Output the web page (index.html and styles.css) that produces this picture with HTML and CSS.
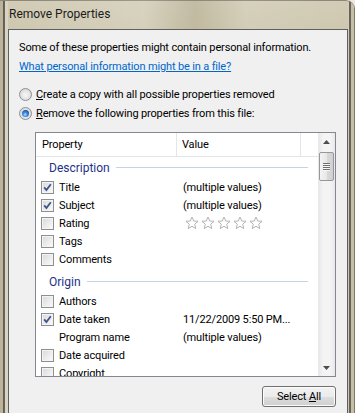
FILE: index.html
```html
<!DOCTYPE html>
<html>
<head>
<meta charset="utf-8">
<link rel="stylesheet" href="styles.css">
</head>
<body>
<div class="window">
  <div class="titlebar"><span class="title">Remove Properties</span></div>
  <div class="client">
    <p class="intro">Some of these properties might contain personal information.</p>
    <p class="intro"><a class="link" href="#">What personal information might be in a file?</a></p>
    <div class="radios">
      <div class="radio"><span class="rb"></span><span><u>C</u>reate a copy with all possible properties removed</span></div>
      <div class="radio"><span class="rb on"></span><span><u>R</u>emove the following properties from this file:</span></div>
    </div>
    <div class="listbox">
      <div class="list">
        <div class="header">
          <div class="hcol c1">Property</div>
          <div class="hcol c2">Value</div>
          <div class="hcol c3"></div>
        </div>
        <div class="group"><span class="gname">Description</span><span class="gline"></span></div>
        <div class="row"><span class="cb"><svg viewBox="0 0 13 13" width="13" height="13"><path d="M3.2 6.4 L5.4 9 L9.8 3.2" fill="none" stroke="#3f548c" stroke-width="1.8"/></svg></span><span class="name">Title</span><span class="val">(multiple values)</span></div>
        <div class="row"><span class="cb"><svg viewBox="0 0 13 13" width="13" height="13"><path d="M3.2 6.4 L5.4 9 L9.8 3.2" fill="none" stroke="#3f548c" stroke-width="1.8"/></svg></span><span class="name">Subject</span><span class="val">(multiple values)</span></div>
        <div class="row"><span class="cb"></span><span class="name">Rating</span><span class="val stars">
          <svg viewBox="0 0 82 14" width="82" height="14">
            <g fill="none" stroke="#b4b4b4" stroke-width="1" stroke-linejoin="round">
              <path d="M7 1 L8.7 5 L13 5.3 L9.7 8.2 L10.8 12.6 L7 10.3 L3.2 12.6 L4.3 8.2 L1 5.3 L5.3 5 Z"/>
              <path transform="translate(16 0)" d="M7 1 L8.7 5 L13 5.3 L9.7 8.2 L10.8 12.6 L7 10.3 L3.2 12.6 L4.3 8.2 L1 5.3 L5.3 5 Z"/>
              <path transform="translate(32 0)" d="M7 1 L8.7 5 L13 5.3 L9.7 8.2 L10.8 12.6 L7 10.3 L3.2 12.6 L4.3 8.2 L1 5.3 L5.3 5 Z"/>
              <path transform="translate(48 0)" d="M7 1 L8.7 5 L13 5.3 L9.7 8.2 L10.8 12.6 L7 10.3 L3.2 12.6 L4.3 8.2 L1 5.3 L5.3 5 Z"/>
              <path transform="translate(64 0)" d="M7 1 L8.7 5 L13 5.3 L9.7 8.2 L10.8 12.6 L7 10.3 L3.2 12.6 L4.3 8.2 L1 5.3 L5.3 5 Z"/>
            </g>
          </svg></span></div>
        <div class="row"><span class="cb"></span><span class="name">Tags</span><span class="val"></span></div>
        <div class="row"><span class="cb"></span><span class="name">Comments</span><span class="val"></span></div>
        <div class="group g2"><span class="gname">Origin</span><span class="gline"></span></div>
        <div class="row"><span class="cb"></span><span class="name">Authors</span><span class="val"></span></div>
        <div class="row"><span class="cb"><svg viewBox="0 0 13 13" width="13" height="13"><path d="M3.2 6.4 L5.4 9 L9.8 3.2" fill="none" stroke="#3f548c" stroke-width="1.8"/></svg></span><span class="name">Date taken</span><span class="val">11/22/2009 5:50 PM...</span></div>
        <div class="row"><span class="cb none"></span><span class="name">Program name</span><span class="val">(multiple values)</span></div>
        <div class="row"><span class="cb"></span><span class="name">Date acquired</span><span class="val"></span></div>
        <div class="row"><span class="cb"></span><span class="name">Copyright</span><span class="val"></span></div>
      </div>
      <div class="scrollbar">
        <div class="sbtn"><svg viewBox="0 0 7 4" width="7" height="4"><path d="M0 4 L3.5 0 L7 4 Z" fill="#4d4d4d"/></svg></div>
        <div class="track">
          <div class="thumb"><span class="grip"></span><span class="grip"></span><span class="grip"></span><span class="grip"></span></div>
        </div>
        <div class="sbtn"><svg viewBox="0 0 7 4" width="7" height="4"><path d="M0 0 L3.5 4 L7 0 Z" fill="#4d4d4d"/></svg></div>
      </div>
    </div>
    <div class="footer"><button class="btn">Select <u>A</u>ll</button></div>
  </div>
</div>
</body>
</html>
```

FILE: styles.css
```css
html, body {
  margin: 0;
  padding: 0;
  background: #e9e8e2;
}
body {
  width: 355px;
  height: 413px;
  overflow: hidden;
  font-family: Roboto, "Noto Sans", sans-serif;
  font-size: 11px;
  letter-spacing: -0.15px;
  color: #000;
}
.window {
  width: 355px;
  height: 430px;
  box-sizing: border-box;
  padding: 0 7px 0 8px;
  border-top-right-radius: 9px;
  background:
    linear-gradient(to right, #bbb49b 0, #bbb49b 3px, #5f5b50 3px, #6b675b 5px, #d9d4c4 5px, #d9d4c4 8px, transparent 8px),
    linear-gradient(to left, #7c786a 0, #7c786a 1px, #c6bfa6 1px, #c6bfa6 4px, #67635a 4px, #67635a 6px, #d6d1bf 6px, transparent 7px),
    linear-gradient(to bottom, #d2ccb6 0, #cdc6ad 40px, #c3bca2 200px, #bdb69c 413px);
  box-shadow: inset 0 1px 0 #8b8676;
}
.titlebar {
  height: 29px;
  display: flex;
  align-items: center;
  padding-left: 1px;
  background: linear-gradient(to right, transparent 0, rgba(255,255,255,0.15) 40%, rgba(150,140,110,0.25) 55%, rgba(255,255,255,0.1) 70%, transparent 100%);
}
.title {
  color: #1b1b1b;
  font-size: 12px;
  letter-spacing: 0;
  position: relative;
  top: -1px;
}
.client {
  background: #f0f0f0;
  border: 1px solid #5d5f63;
  height: 400px;
  padding: 8px 11px 0 10px;
  box-sizing: border-box;
}
.intro {
  margin: 0;
  line-height: 19px;
  white-space: nowrap;
}
.link {
  color: #0066cc;
  text-decoration: underline;
}
.radios {
  margin-top: 9px;
}
.radio {
  display: flex;
  align-items: center;
  height: 19px;
  white-space: nowrap;
}
.rb {
  width: 11px;
  height: 11px;
  border: 1px solid #8c8f94;
  border-radius: 50%;
  margin-right: 4px;
  background: radial-gradient(circle at 50% 55%, #f8f8f8 0, #e6e6e6 45%, #c9c9c9 100%);
  display: flex;
  align-items: center;
  justify-content: center;
  flex: none;
}
.rb.on::after {
  content: "";
  width: 7px;
  height: 7px;
  border-radius: 50%;
  background: radial-gradient(circle at 45% 65%, #a8e2ff 0, #3e8ee0 35%, #164f9e 75%, #0b3570 100%);
}
.listbox {
  margin: 9px 0 0 16px;
  width: 301px;
  height: 245px;
  box-sizing: border-box;
  border: 1px solid #828790;
  background: #fff;
  display: flex;
  overflow: hidden;
}
.list {
  flex: 1;
  overflow: hidden;
}
.header {
  display: flex;
  height: 23px;
  border-bottom: 1px solid #e5e5e5;
  background: #fff;
}
.hcol {
  display: flex;
  align-items: center;
  border-right: 1px solid #e5e5e5;
  box-sizing: border-box;
}
.c1 { width: 141px; padding-left: 6px; }
.c2 { width: 124px; padding-left: 5px; }
.c3 { flex: 1; border-right: none; }
.group {
  display: flex;
  align-items: center;
  height: 21px;
  padding-left: 13px;
  padding-right: 10px;
}
.group.g2 {
  margin-top: 3px;
}
.gname {
  color: #1e3287;
  font-size: 12px;
  letter-spacing: 0;
}
.gline {
  flex: 1;
  height: 1px;
  background: #c7d3e2;
  margin-left: 6px;
}
.row {
  display: flex;
  align-items: center;
  height: 18px;
  white-space: nowrap;
}
.cb {
  width: 13px;
  height: 13px;
  box-sizing: border-box;
  margin-left: 5px;
  margin-right: 5px;
  flex: none;
  border: 1px solid #8e8f8f;
  background: linear-gradient(135deg, #d8d8d8 0, #ececec 55%, #fbfbfb 100%);
  box-shadow: inset 0 0 0 1px #f4f4f4;
  position: relative;
}
.cb svg {
  position: absolute;
  left: -1px;
  top: -1px;
}
.cb.none {
  border: none;
  background: none;
  box-shadow: none;
}
.name {
  width: 124px;
  flex: none;
}
.stars {
  display: flex;
  align-items: center;
  padding-left: 2px;
}
.scrollbar {
  width: 17px;
  flex: none;
  display: flex;
  flex-direction: column;
  background: linear-gradient(to right, #e6e6e6, #f4f4f4 30%, #f4f4f4 70%, #e9e9e9);
}
.sbtn {
  height: 17px;
  display: flex;
  align-items: center;
  justify-content: center;
}
.track {
  flex: 1;
  padding-top: 2px;
}
.thumb {
  margin: 0 1px;
  height: 29px;
  box-sizing: border-box;
  border: 1px solid #979797;
  border-radius: 2px;
  background: linear-gradient(to right, #f3f3f3, #e8e8e8 50%, #d9d9d9 51%, #d0d0d0);
  display: flex;
  flex-direction: column;
  align-items: center;
  justify-content: center;
  gap: 1px;
}
.grip {
  width: 7px;
  height: 1px;
  background: #6f6f6f;
  box-shadow: 0 1px 0 #f8f8f8;
}
.footer {
  display: flex;
  justify-content: flex-end;
  margin-top: 9px;
}
.btn {
  width: 74px;
  height: 21px;
  font-family: inherit;
  font-size: 11px;
  letter-spacing: -0.15px;
  color: #000;
  border: 1px solid #707070;
  border-radius: 3px;
  background: linear-gradient(to bottom, #f2f2f2 0, #ebebeb 50%, #dddddd 51%, #cfcfcf 100%);
  box-shadow: inset 0 0 0 1px #fbfbfb;
  padding: 0;
  margin: 0;
}
```
